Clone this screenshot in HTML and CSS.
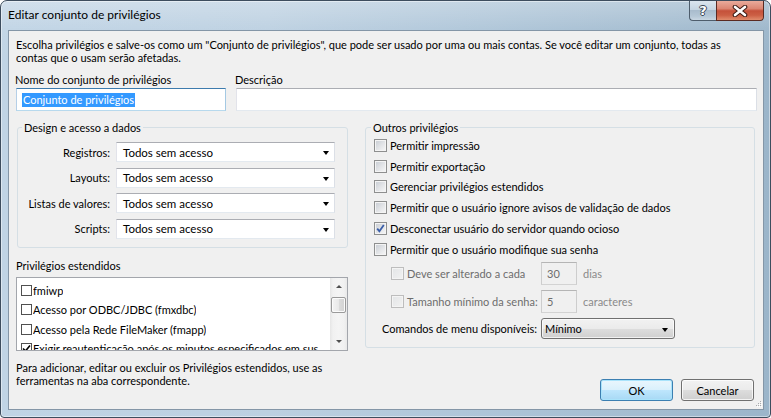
FILE: index.html
```html
<!DOCTYPE html>
<html lang="pt">
<head>
<meta charset="utf-8">
<title>Editar conjunto de privilégios</title>
<link rel="stylesheet" href="styles.css">
</head>
<body>
<div class="window">
  <div class="titlebar">
    <span class="title">Editar conjunto de privilégios</span>
    <div class="caption">
      <span class="cap help">?</span>
      <span class="cap close">
        <svg width="16" height="12" viewBox="0 0 16 12">
          <path d="M3 2 L13 10 M13 2 L3 10" stroke="#3b1a14" stroke-width="4.6" stroke-linecap="round"/>
          <path d="M3 2 L13 10 M13 2 L3 10" stroke="#ffffff" stroke-width="2.6" stroke-linecap="round"/>
        </svg>
      </span>
    </div>
  </div>
  <div class="client">
    <p class="intro">Escolha privilégios e salve-os como um "Conjunto de privilégios", que pode ser usado por uma ou mais contas. Se você editar um conjunto, todas as<br>contas que o usam serão afetadas.</p>

    <div class="name-row">
      <div class="field field-name">
        <div class="lbl">Nome do conjunto de privilégios</div>
        <div class="textbox focused"><span class="sel">Conjunto de privilégios</span></div>
      </div>
      <div class="field field-desc">
        <div class="lbl">Descrição</div>
        <div class="textbox"></div>
      </div>
    </div>

    <div class="columns">
      <div class="col-left">
        <fieldset class="group group-design">
          <legend>Design e acesso a dados</legend>
          <div class="combo-rows">
            <div class="combo-row"><span class="combo-label">Registros:</span><div class="combo"><span>Todos sem acesso</span><i class="tri"></i></div></div>
            <div class="combo-row"><span class="combo-label">Layouts:</span><div class="combo"><span>Todos sem acesso</span><i class="tri"></i></div></div>
            <div class="combo-row"><span class="combo-label">Listas de valores:</span><div class="combo"><span>Todos sem acesso</span><i class="tri"></i></div></div>
            <div class="combo-row"><span class="combo-label">Scripts:</span><div class="combo"><span>Todos sem acesso</span><i class="tri"></i></div></div>
          </div>
        </fieldset>

        <div class="ext-label">Privilégios estendidos</div>
        <div class="listbox">
          <div class="list-items">
            <div class="item"><span class="fcb"></span><span class="item-text">fmiwp</span></div>
            <div class="item"><span class="fcb"></span><span class="item-text">Acesso por ODBC/JDBC (fmxdbc)</span></div>
            <div class="item"><span class="fcb"></span><span class="item-text">Acesso pela Rede FileMaker (fmapp)</span></div>
            <div class="item"><span class="fcb checked"><svg width="9" height="9" viewBox="0 0 9 9"><path d="M1 4.5 L3.5 7 L8 1.5" fill="none" stroke="#000" stroke-width="1.6"/></svg></span><span class="item-text">Exigir reautenticação após os minutos especificados em sus...</span></div>
          </div>
          <div class="scrollbar">
            <div class="sb-btn"><i class="sb-up"></i></div>
            <div class="sb-track"><div class="sb-thumb"></div></div>
            <div class="sb-btn"><i class="sb-down"></i></div>
          </div>
        </div>
        <p class="hint">Para adicionar, editar ou excluir os Privilégios estendidos, use as<br>ferramentas na aba correspondente.</p>
      </div>

      <div class="col-right">
        <fieldset class="group group-other">
          <legend>Outros privilégios</legend>
          <div class="other-inner">
            <div class="check-row"><span class="cb"></span><span>Permitir impressão</span></div>
            <div class="check-row"><span class="cb"></span><span>Permitir exportação</span></div>
            <div class="check-row"><span class="cb"></span><span>Gerenciar privilégios estendidos</span></div>
            <div class="check-row"><span class="cb"></span><span>Permitir que o usuário ignore avisos de validação de dados</span></div>
            <div class="check-row"><span class="cb"><svg width="11" height="11" viewBox="0 0 11 11"><path d="M2.2 5.6 L4.4 8.2 L8.8 2" fill="none" stroke="#3a5ea8" stroke-width="1.8"/></svg></span><span>Desconectar usuário do servidor quando ocioso</span></div>
            <div class="check-row"><span class="cb"></span><span>Permitir que o usuário modifique sua senha</span></div>

            <div class="sub-row first">
              <div class="sub-label"><span class="cb disabled"></span><span>Deve ser alterado a cada</span></div>
              <div class="numbox">30</div>
              <span class="unit">dias</span>
            </div>
            <div class="sub-row">
              <div class="sub-label"><span class="cb disabled"></span><span>Tamanho mínimo da senha:</span></div>
              <div class="numbox">5</div>
              <span class="unit">caracteres</span>
            </div>
            <div class="menu-row">
              <span class="menu-label">Comandos de menu disponíveis:</span>
              <div class="dropdown"><span>Mínimo</span><i class="tri"></i></div>
            </div>
          </div>
        </fieldset>
        <div class="buttons">
          <button class="btn btn-default" type="button">OK</button>
          <button class="btn" type="button">Cancelar</button>
        </div>
      </div>
    </div>
    <div class="grip">
      <svg width="7" height="7" viewBox="0 0 7 7">
        <g fill="#a7a9ac">
          <rect x="5" y="0" width="1" height="1"/>
          <rect x="3" y="2" width="1" height="1"/><rect x="5" y="2" width="1" height="1"/>
          <rect x="1" y="4" width="1" height="1"/><rect x="3" y="4" width="1" height="1"/><rect x="5" y="4" width="1" height="1"/>
        </g>
        <g fill="#ffffff">
          <rect x="6" y="1" width="1" height="1"/>
          <rect x="4" y="3" width="1" height="1"/><rect x="6" y="3" width="1" height="1"/>
          <rect x="2" y="5" width="1" height="1"/><rect x="4" y="5" width="1" height="1"/><rect x="6" y="5" width="1" height="1"/>
        </g>
      </svg>
    </div>
  </div>
</div>
</body>
</html>
```
FILE: styles.css
```css
* { box-sizing: border-box; margin: 0; padding: 0; }
html, body { width: 771px; height: 418px; overflow: hidden; }
body {
  font-family: Lato, "Liberation Sans", sans-serif;
  font-size: 11px;
  color: #000;
  background: #ffffff;
}

.window {
  width: 771px;
  height: 418px;
  border: 1px solid #3d4d5e;
  border-radius: 7px 7px 4px 4px;
  background:
    linear-gradient(180deg, rgba(255,255,255,0.28) 0, rgba(255,255,255,0.05) 28px, rgba(255,255,255,0) 60px),
    linear-gradient(90deg, #c0d4e5 0%, #bcd0e1 35%, #afc6d9 60%, #a3bcd0 85%, #9bb5ca 100%);
  box-shadow: inset 0 0 0 1px rgba(255,255,255,0.45);
  display: flex;
  flex-direction: column;
}

.titlebar {
  height: 29px;
  flex: none;
  display: flex;
  justify-content: space-between;
  align-items: flex-start;
  padding: 0 6px 0 7px;
}
.title {
  font-size: 12px;
  line-height: 15px;
  margin-top: 6px;
  color: #000;
}
.caption { display: flex; height: 20px; }
.cap {
  height: 20px;
  display: flex;
  align-items: center;
  justify-content: center;
  border: 1px solid #4e5d6c;
  border-top: none;
}
.help {
  width: 27px;
  border-right: none;
  border-radius: 0 0 0 4px;
  background: linear-gradient(180deg, #dbe5ee 0%, #c6d5e2 45%, #a9bccd 50%, #b5c7d6 80%, #c9d7e3 100%);
  color: #fff;
  font-family: "DejaVu Sans", sans-serif;
  font-weight: bold;
  font-size: 13px;
  line-height: 1;
  text-shadow: 1px 0 0 #3a4756, -1px 0 0 #3a4756, 0 1px 0 #3a4756, 0 -1px 0 #3a4756;
}
.close {
  width: 48px;
  border-color: #5a2a22;
  border-radius: 0 0 4px 0;
  background: linear-gradient(180deg, #e9ab9c 0%, #db8673 40%, #c5513a 52%, #cc5f44 75%, #e08c6c 100%);
}

.client {
  flex: 1;
  margin: 0 6px 7px 7px;
  background: #f0f0f0;
  border: 1px solid #8496a7;
  padding: 7px 6px 0 7px;
  position: relative;
}

.intro { line-height: 13px; }

.name-row { display: flex; gap: 10px; margin-top: 9px; }
.field-name { width: 210px; flex: none; }
.field-desc { flex: 1; }
.lbl { line-height: 13px; margin-bottom: 2px; margin-left: -1px; }
.textbox {
  height: 23px;
  background: #fff;
  border: 1px solid;
  border-color: #abadb3 #dbdfe6 #e3e9ef #e2e3ea;
  display: flex;
  align-items: center;
  padding-left: 5px;
}
.textbox.focused { border-color: #3d7bad #a4c9e3 #b7d9ed #b5cfe7; }
.sel {
  background: #3399ff;
  color: #fff;
  line-height: 14px;
  padding: 0 1px;
}

.columns { display: flex; gap: 17px; margin-top: 10px; }
.col-left { width: 332px; flex: none; }
.col-right { flex: 1; }

.group {
  border: 1px solid #d5dfe5;
  border-radius: 3px;
  min-width: 0;
  box-shadow: 0 0 0 0 transparent;
}
.group legend {
  line-height: 13px;
  padding: 0 2px;
  margin-left: 5px;
}
.group-design { margin-left: 1px; }
.group-design legend { margin-left: 4px; }
.group-other { margin-right: 2px; }

.combo-rows {
  display: flex;
  flex-direction: column;
  gap: 5.67px;
  padding: 8px 0 8px 0;
}
.combo-row { display: flex; align-items: center; height: 20px; }
.combo-label { width: 92px; text-align: right; flex: none; }
.combo {
  width: 219px;
  height: 20px;
  margin-left: 6px;
  background: #fff;
  border: 1px solid;
  border-color: #abadb3 #dbdfe6 #e3e9ef #e2e3ea;
  display: flex;
  align-items: center;
  justify-content: space-between;
  padding: 0 5px 0 6px;
  font-size: 11.5px;
}
.tri {
  width: 0;
  height: 0;
  border-left: 3.5px solid transparent;
  border-right: 3.5px solid transparent;
  border-top: 4px solid #000;
  margin-top: 2px;
}

.ext-label { line-height: 13px; margin-top: 11px; }

.listbox {
  margin-top: 5px;
  height: 74px;
  border: 1px solid #a3a6ac;
  background: #fff;
  display: flex;
}
.list-items { flex: 1; overflow: hidden; padding: 3px 0 0 4px; min-width: 0; }
.item { height: 19.3px; display: flex; align-items: center; white-space: nowrap; }
.fcb {
  width: 11px;
  height: 11px;
  flex: none;
  border: 1px solid #505050;
  background: #fff;
  display: flex;
  align-items: center;
  justify-content: center;
  margin-right: 1px;
}
.fcb.checked { border-color: #505050; }
.item-text { overflow: hidden; }

.scrollbar {
  width: 17px;
  flex: none;
  display: flex;
  flex-direction: column;
  background: linear-gradient(90deg, #e6e6e6 0, #f1f1f1 3px, #f4f4f4 50%, #f1f1f1 14px, #e9e9e9 100%);
}
.sb-btn { height: 17px; display: flex; align-items: center; justify-content: center; flex: none; }
.sb-up, .sb-down {
  width: 0; height: 0;
  border-left: 3px solid transparent;
  border-right: 3px solid transparent;
}
.sb-up { border-bottom: 3px solid #4f4f4f; }
.sb-down { border-top: 3px solid #4f4f4f; }
.sb-track { flex: 1; padding: 2px 1px 0 1px; }
.sb-thumb {
  height: 16px;
  border: 1px solid #9a9a9a;
  border-radius: 2px;
  background: linear-gradient(90deg, #f4f4f4 0%, #e9e9e9 50%, #dcdcdc 51%, #d2d2d2 100%);
  box-shadow: inset 0 0 0 1px #fbfbfb;
}

.hint { line-height: 13px; margin-top: 10px; }

.other-inner { padding: 1px 0 8px 8px; }
.check-row { height: 20.8px; display: flex; align-items: center; }
.cb {
  width: 13px;
  height: 13px;
  flex: none;
  border: 1px solid #8e8f8f;
  background: linear-gradient(135deg, #c6cbd2 0%, #e1e3e6 50%, #f8f8f8 100%);
  box-shadow: inset 0 0 0 1px #f4f4f4;
  margin-right: 3px;
  display: flex;
  align-items: center;
  justify-content: center;
}
.cb svg { flex: none; }
.cb.disabled {
  border-color: #bdbdbd;
  background: linear-gradient(135deg, #e3e5e7 0%, #f2f2f2 100%);
}

.sub-row { display: flex; align-items: center; height: 23px; margin-top: 5px; padding-left: 17px; }
.sub-row.first { margin-top: 2px; }
.sub-label { width: 150px; display: flex; align-items: center; color: #6d6d6d; flex: none; }
.numbox {
  width: 36px;
  height: 23px;
  border: 1px solid;
  border-color: #b5b5b5 #cdcdcd #d3d3d3 #cdcdcd;
  background: #f0f0f0;
  color: #6d6d6d;
  display: flex;
  align-items: center;
  padding-left: 5px;
  flex: none;
}
.unit { margin-left: 6px; color: #8a8a8a; }

.menu-row { display: flex; align-items: center; height: 21px; margin-top: 5.7px; padding-left: 8px; }
.menu-label { width: 159px; flex: none; }
.dropdown {
  width: 134px;
  height: 21px;
  border: 1px solid #707070;
  border-radius: 3px;
  background: linear-gradient(180deg, #f2f2f2 0%, #ebebeb 50%, #dddddd 51%, #cfcfcf 100%);
  box-shadow: inset 0 0 0 1px rgba(255,255,255,0.7);
  display: flex;
  align-items: center;
  justify-content: space-between;
  padding: 0 6px 0 3px;
}

.buttons { display: flex; justify-content: flex-end; gap: 8px; margin-top: 31px; padding-right: 3px; }
.btn {
  width: 73px;
  height: 22px;
  font-family: inherit;
  font-size: 11px;
  color: #000;
  border: 1px solid #707070;
  border-radius: 3px;
  background: linear-gradient(180deg, #f2f2f2 0%, #ebebeb 50%, #dddddd 51%, #cfcfcf 100%);
  box-shadow: inset 0 0 0 1px rgba(255,255,255,0.75);
}
.btn-default {
  border-color: #3c7fb1;
  background: linear-gradient(180deg, #eaf6fd 0%, #d9f0fc 50%, #bee6fd 51%, #a7d9f5 100%);
  box-shadow: inset 0 0 0 1px #a9e3fb;
}

.grip { position: absolute; right: 1px; bottom: 1px; width: 7px; height: 7px; display: flex; }
```
